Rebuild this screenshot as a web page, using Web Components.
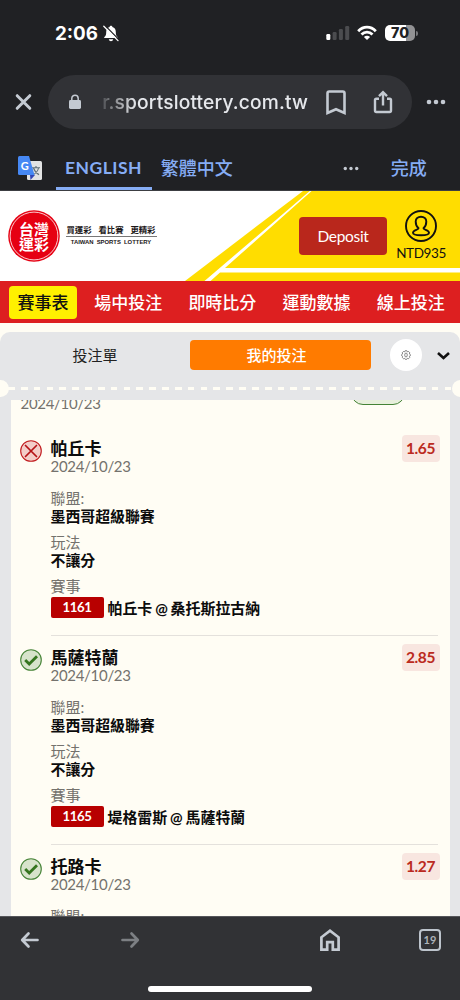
<!DOCTYPE html>
<html lang="zh-Hant">
<head>
<meta charset="utf-8">
<title>Taiwan Sports Lottery</title>
<style>
html,body{margin:0;padding:0}
body{width:460px;height:1000px;overflow:hidden;background:#202124;font-family:Lato,"Noto Sans CJK TC",sans-serif}
</style>
</head>
<body>
<lottery-app></lottery-app>
<script>
const define = (name, render) => customElements.define(name, class extends HTMLElement {
  constructor() { super(); this.attachShadow({mode: 'open'}); }
  connectedCallback() {
    const t = document.createElement('template');
    t.innerHTML = '<style>*{box-sizing:border-box}svg{display:block;flex:none}</style>' + render(this);
    this.shadowRoot.replaceChildren(t.content.cloneNode(true));
  }
});

define('status-bar', () => `
<style>
:host{display:flex;height:66px;box-sizing:border-box;padding:0 42px 0 55px;align-items:center;color:#fff;font-family:Inter,sans-serif}
.time{font-weight:700;font-size:18.800px;line-height:20px;width:48px;padding-top:1px;white-space:nowrap}
.right{margin-left:auto;display:flex;align-items:center}
.bat{width:30px;height:16px;border-radius:5px;background:linear-gradient(90deg,#fff 70%,#929294 70%);color:#202124;font-weight:800;font-size:14.200px;line-height:16.500px;text-align:center;margin-left:8px}
.cap{width:2px;height:5px;border-radius:0 2px 2px 0;background:#77787b;margin-left:1px}
</style>
<span class="time">2:06</span>
<svg width="16" height="17" viewBox="0 0 16 17"><path d="M8 .7c-.9 0-1.4.6-1.400 1.300C4.200 2.700 3.200 4.600 3.200 7c0 3-.5 3.800-2 5.200v.9h13.600v-.9c-1.500-1.400-2-2.200-2-5.200 0-2.400-1-4.300-3.400-5C9.400 1.300 8.900.7 8 .7zM5.800 14.300c.2 1.200 1.100 1.900 2.200 1.900s2-.7 2.200-1.900z" fill="#fff"/><path d="M1.800 .4L16.200 14.800" stroke="#202124" stroke-width="1.300"/><path d="M.8 1.200L15 15.600" stroke="#fff" stroke-width="1.300" stroke-linecap="round"/></svg>
<div class="right">
<svg width="24" height="16" viewBox="0 0 24 16"><rect x=".3" y="9" width="4" height="6" rx="1.200" fill="#fff"/><rect x="6.600" y="7" width="4" height="8" rx="1.200" fill="#4b4c4f"/><rect x="12.900" y="4" width="4" height="11" rx="1.200" fill="#4b4c4f"/><rect x="19.200" y="1" width="4" height="14" rx="1.200" fill="#4b4c4f"/></svg>
<svg style="margin-left:7px" width="20" height="16" viewBox="0 0 20 16" fill="none" stroke="#fff" stroke-width="2.800"><path d="M1.200 6.200C6.200 .8 13.800 .8 18.800 6.200"/><path d="M4.500 9.500c3.200-3.200 7.800-3.200 11 0"/><path d="M10 15L6.900 11.900c1.800-1.600 4.400-1.600 6.200 0z" fill="#fff" stroke="none"/></svg>
<span class="bat">70</span><span class="cap"></span>
</div>`);

define('address-bar', () => `
<style>
:host{display:flex;align-items:center;height:72px;padding:0 14px;box-sizing:border-box}
.pill{display:flex;align-items:center;width:364px;height:54px;margin:0 14px 0 15px;border-radius:27px;background:#313236;padding-left:20px}
.url{width:208px;margin-left:18px;font:500 19.200px/28px Inter,sans-serif;letter-spacing:.16px;color:#e6e8ec;white-space:nowrap;-webkit-mask-image:linear-gradient(90deg,rgba(0,0,0,.1) 0,rgba(0,0,0,.4) 10px,#000 36px);display:flex;justify-content:flex-end}
</style>
<svg width="19" height="20" viewBox="0 0 19 20"><path d="M3.200 3.700l12.600 12.600M15.800 3.700L3.200 16.300" stroke="#c4cad2" stroke-width="3" stroke-linecap="round"/></svg>
<div class="pill">
<svg width="14" height="16" viewBox="0 0 14 16"><rect x="1" y="6" width="12" height="9" rx="1.400" fill="#c4cad2"/><path d="M3.800 7V4.400a3.200 3.200 0 016.400 0V7" fill="none" stroke="#c4cad2" stroke-width="1.500"/></svg>
<span class="url">r.sportslottery.com.tw</span>
<svg style="margin-left:17px" width="22" height="27" viewBox="0 0 22 27"><path d="M2.500 24V4.200Q2.500 2.500 4.200 2.500h13.600q1.700 0 1.700 1.700V24L11 20.200z" fill="none" stroke="#c4cad2" stroke-width="2.600"/></svg>
<svg style="margin-left:26px" width="20" height="25" viewBox="0 0 20 25" fill="none" stroke="#c4cad2" stroke-width="2.400"><path d="M6 8.700H3.400Q2 8.700 2 10.100v10.500Q2 22 3.400 22h13.200q1.400 0 1.400-1.400V10.100q0-1.400-1.400-1.400H14M10 15.500V3M6 6.200l4-4 4 4"/></svg>
</div>
<svg width="20" height="6" viewBox="0 0 20 6" fill="#c4cad2"><circle cx="3" cy="3" r="2.300"/><circle cx="10" cy="3" r="2.300"/><circle cx="17" cy="3" r="2.300"/></svg>`);

define('translate-bar', () => `
<style>
:host{display:flex;height:53px;box-sizing:border-box;padding-left:18px;border-bottom:1px solid #3c3e42;color:#86adf5;font-weight:500;font-size:18px;line-height:26px}
svg.g{margin-top:18px}
.tab{width:96px;height:52px;margin-left:14px;padding:17px 1px 0 0;text-align:center;border-bottom:3px solid #86adf5;white-space:nowrap;font-family:Lato;font-weight:700;font-size:17.500px;letter-spacing:.5px}
.zh{margin:17px 0 0 8.700px;width:74px;white-space:nowrap}
.dots{margin:28px 0 0 108px}
.done{margin:17px 0 0 32px}
</style>
<svg class="g" width="24" height="25" viewBox="0 0 24 25"><rect x="9" y="5" width="15" height="19" rx="1.500" fill="#e2e3e4"/><path d="M12 19h5l-4.500 5z" fill="#3347b5"/><path d="M14 11.700h8M18 10v1.700M20.500 12c-.6 3-3 5.500-5.500 6.800M15.500 12c.8 2.800 3 5 5.500 6.800" stroke="#607078" stroke-width="1.100" fill="none"/><path d="M1.500 0H11l5.500 19h-15Q0 19 0 17.500v-16Q0 0 1.500 0z" fill="#4688f4"/><text x="2.700" y="14" font-family="Lato" font-size="11" font-weight="700" fill="#fff">G</text></svg>
<span class="tab">ENGLISH</span><span class="zh">繁體中文</span>
<svg class="dots" width="16" height="5" viewBox="0 0 16 5" fill="#c4cad2"><circle cx="2.300" cy="2.500" r="1.700"/><circle cx="8" cy="2.500" r="1.700"/><circle cx="13.700" cy="2.500" r="1.700"/></svg>
<span class="done">完成</span>`);

define('site-header', () => `
<style>
:host{display:grid;height:90px;background:#fff;overflow:hidden}
.bg,.row{grid-area:1/1}
.row{display:flex;z-index:1;padding-left:8px}
.seal{margin-top:19px}
.words{width:91px;margin:31px 0 0 5.500px;color:#1b1718;text-align:center}
.zh{display:flex;justify-content:space-between;padding:0 1px;font:700 8.400px/14px "Noto Sans CJK TC",sans-serif;white-space:nowrap}
.en{border-top:1px solid #777;padding-top:1px;font:600 5.900px/9px "Liberation Sans",sans-serif;white-space:nowrap;word-spacing:1.500px}
.dep{width:88px;height:38px;margin:26px 0 0 142.500px;border-radius:4px;background:#b9271c;color:#fff;font-size:15.500px;letter-spacing:-.3px;line-height:38px;text-align:center}
.user{width:60px;margin:19px 0 0 4px;display:flex;flex-direction:column;align-items:center;color:#111;font-size:13.500px;letter-spacing:-.4px;line-height:18px}
.user span{margin-top:1.500px}
</style>
<svg class="bg" width="460" height="90" viewBox="0 0 460 90"><path d="M303 0H460V90H185z" fill="#fd0"/><path d="M309.800 0h1.800L225 77H460v4.500H220L210.500 90H204.500z" fill="#fff"/></svg>
<div class="row">
<svg class="seal" width="52" height="52" viewBox="0 0 52 52"><circle cx="26" cy="26" r="25.800" fill="#e60012"/><circle cx="26" cy="26" r="23.900" fill="none" stroke="#fff" stroke-width=".8"/><g fill="#fff" font-family="Noto Sans CJK TC" font-weight="700" font-size="15"><text x="11" y="24.500">台灣</text><text x="11" y="39.500">運彩</text></g></svg>
<div class="words"><div class="zh"><span>買運彩</span><span>看比賽</span><span>更精彩</span></div><div class="en">TAIWAN SPORTS LOTTERY</div></div>
<div class="dep">Deposit</div>
<div class="user"><svg width="32" height="32" viewBox="0 0 32 32" fill="none" stroke="#111" stroke-width="1.900"><circle cx="16" cy="16" r="15"/><path d="M13.500 18.200C11.300 16.500 10.700 14 10.700 11.500 10.700 8.500 13 6.700 16 6.700s5.300 1.800 5.300 4.800c0 2.500-.6 5-2.800 6.700 0 1.800 5.500 1.600 5.500 4.600 0 1.700-3.500 2.500-8 2.500s-8-.8-8-2.500c0-3 5.500-2.800 5.500-4.600z"/></svg><span>NTD935</span></div>
</div>`);

define('site-nav', () => `
<style>
:host{display:flex;height:42px;box-sizing:border-box;align-items:center;padding-left:9px;gap:26.200px;background:#dd1f20;color:#fff;font:500 17px/31px "Noto Sans CJK TC",sans-serif;white-space:nowrap}
span{width:68px;height:33px;text-align:center}
.on{background:#fff000;color:#111;border-radius:4px;margin-right:-9px}
</style>
<span class="on">賽事表</span><span>場中投注</span><span>即時比分</span><span>運動數據</span><span>線上投注</span>`);

define('slip-tabs', () => `
<style>
:host{display:block;position:relative;height:68px}
.tabs{display:flex;align-items:center;height:46px;font:400 15px/30px "Noto Sans CJK TC",sans-serif;color:#222}
.a{width:190px;text-align:center}.b{width:181px;height:30px;padding-right:8px;border-radius:4px;background:#ff7b00;color:#fff;font-weight:500;text-align:center}
.gear{width:32px;height:32px;margin:0 15px 0 19px;border-radius:50%;background:#fff;display:grid;place-items:center}
.dash{height:2.500px;margin:9px 8px 0;background:repeating-linear-gradient(90deg,#fffdf4 0 6.700px,transparent 6.700px 12.840px)}
i{position:absolute;top:47.500px;width:17px;height:17px;border-radius:50%;background:#fffdf4}
.l{left:-8.500px}.r{right:-8.500px}
</style>
<div class="tabs"><span class="a">投注單</span><span class="b">我的投注</span><span class="gear"><svg width="10" height="10" viewBox="0 0 10 10" fill="none" stroke="#666" stroke-width=".8"><path d="M4 .8h2l.5 1 1.100-.3 1.200 1.300-.4 1.100.9.600v1.300l-.9.600.3 1.100-1.200 1.200-1.100-.3L5.800 9.300H4.200l-.6-.9-1.100.3-1.200-1.200.3-1.100-.9-.6V4.500l.9-.6-.4-1.100 1.200-1.300 1.100.3z"/><rect x="3.800" y="3.200" width="2.400" height="3.600" rx="1"/></svg></span><svg width="13" height="9" viewBox="0 0 13 9"><path d="M1 2l5.500 5L12 2" fill="none" stroke="#111" stroke-width="2.600"/></svg></div>
<div class="dash"></div><i class="l"></i><i class="r"></i>`);

define('status-icon', el => `
<style>:host{display:block;width:22px;height:22px}</style>` + (el.getAttribute('result') === 'lose'
 ? `<svg width="22" height="22" viewBox="0 0 22 22"><circle cx="11" cy="11" r="10.300" fill="#f3cdc9" stroke="#c11a1d" stroke-width="1.100"/><path d="M5.500 5.500l11 11M16.500 5.500l-11 11" stroke="#b51216" stroke-width="1.700" stroke-linecap="round"/></svg>`
 : `<svg width="22" height="22" viewBox="0 0 22 22"><circle cx="11" cy="11" r="10.300" fill="#d7e3cb" stroke="#458336" stroke-width="1.100"/><path d="M5.200 11l4 4 7.800-7.800" fill="none" stroke="#35751f" stroke-width="2.800"/></svg>`));

define('bet-item', el => `
<style>
:host{display:flex;height:209px;box-sizing:border-box;padding-left:9px;color:#0c0c0c;white-space:nowrap}
status-icon{margin-top:13px}
.body{width:387px;margin-left:8.500px;border-bottom:1px solid #e4e1dc;padding-top:13px}
h3,p{margin:0}
h3{font-size:17px;line-height:18px;font-weight:700}
.sub{font-size:15px;letter-spacing:-.3px;line-height:16px;color:#74726d}
.lab{font-size:15px;line-height:18px;color:#74726d}
.val{font-size:14.900px;line-height:18px;font-weight:700}
.match{display:flex;align-items:center;height:21px;margin-top:2px;font-size:14.950px;font-weight:700}
.match span:last-child{word-spacing:-.8px;padding-bottom:1px}
.no{width:53px;height:21px;border-radius:2px;background:#b80000;color:#fff;font-size:13.200px;letter-spacing:-.35px;line-height:21px;text-align:center;margin-right:4px}
.odds{width:38px;height:27px;margin:8px 0 0 -36px;border-radius:4px;background:#f8e6e0;color:#bb2a20;font-weight:700;font-size:15.500px;letter-spacing:-.4px;line-height:27px;text-align:center}
</style>
<status-icon result="${el.getAttribute('result')}"></status-icon>
<div class="body"><h3><slot></slot></h3><p class="sub">2024/10/23</p>
<p class="lab" style="margin-top:15px">聯盟:</p><p class="val">墨西哥超級聯賽</p>
<p class="lab" style="margin-top:8px">玩法</p><p class="val">不讓分</p>
<p class="lab" style="margin-top:8px">賽事</p>
<div class="match"><span class="no">${el.getAttribute('no')}</span><span>${el.getAttribute('match')}</span></div></div>
<span class="odds">${el.getAttribute('odds')}</span>`);

define('bet-slip', () => `
<style>
:host{display:block;height:593px;padding-top:9px;box-sizing:border-box;background:#fffdf4}
.panel{height:584px;background:#e5e6e8;border-radius:10px 10px 0 0}
.list{width:439px;height:516px;margin-left:11px;background:#fffdf4;overflow:hidden}
.prev{display:flex;justify-content:space-between;height:27px;padding:0 45px 0 9.500px;color:#74726d;font-size:15px;letter-spacing:-.3px;line-height:16px}
.prev span{margin-top:-5px}
.prev b{width:54px;height:24px;margin-top:-19px;border:1px solid #458336;border-radius:12px;background:#e8efdc}
</style>
<div class="panel"><slip-tabs></slip-tabs>
<div class="list"><div class="prev"><span>2024/10/23</span><b></b></div>
<bet-item result="lose" odds="1.65" no="1161" match="帕丘卡 @ 桑托斯拉古納">帕丘卡</bet-item>
<bet-item result="win" odds="2.85" no="1165" match="堤格雷斯 @ 馬薩特蘭">馬薩特蘭</bet-item>
<bet-item result="win" odds="1.27" no="" match="">托路卡</bet-item>
</div></div>`);

define('browser-toolbar', () => `
<style>
:host{display:flex;flex-direction:column;height:84px;box-sizing:border-box;background:#313235;border-top:1px solid #55565a}
.row{display:flex;align-items:center;height:46px;padding:0 19px 0 20px}
.tabs{width:22px;height:22px;border:2px solid #bdc4cc;border-radius:4px;color:#aeb4bb;font-weight:700;font-size:11px;line-height:18px;text-align:center;margin-left:auto}
.home{width:164px;height:5.500px;border-radius:3px;background:#fff;margin:23px auto 0}
</style>
<div class="row">
<svg width="20" height="18" viewBox="0 0 20 18"><path d="M17.500 9H3M8.500 2.500L2.200 9l6.300 6.500" fill="none" stroke="#c4cad2" stroke-width="2.700" stroke-linecap="round" stroke-linejoin="round"/></svg>
<svg style="margin-left:80px" width="20" height="18" viewBox="0 0 20 18"><path d="M2.500 9H17M11.500 2.500L17.800 9l-6.300 6.500" fill="none" stroke="#7d8084" stroke-width="2.700" stroke-linecap="round" stroke-linejoin="round"/></svg>
<svg style="margin-left:179px" width="22" height="24" viewBox="0 0 22 24"><path d="M2.400 21.700V9.300L11 2.600l8.600 6.700v12.400h-5.800v-7.500H8.200v7.500z" fill="none" stroke="#c4cad2" stroke-width="2.700"/></svg>
<span class="tabs">19</span></div><div class="home"></div>`);

define('lottery-app', () => `
<style>:host{display:flex;flex-direction:column;width:460px;height:1000px;background:#202124;overflow:hidden}:host>*{flex:none}</style>
<status-bar></status-bar><address-bar></address-bar><translate-bar></translate-bar><site-header></site-header><site-nav></site-nav><bet-slip></bet-slip><browser-toolbar></browser-toolbar>`);
</script>
</body>
</html>
